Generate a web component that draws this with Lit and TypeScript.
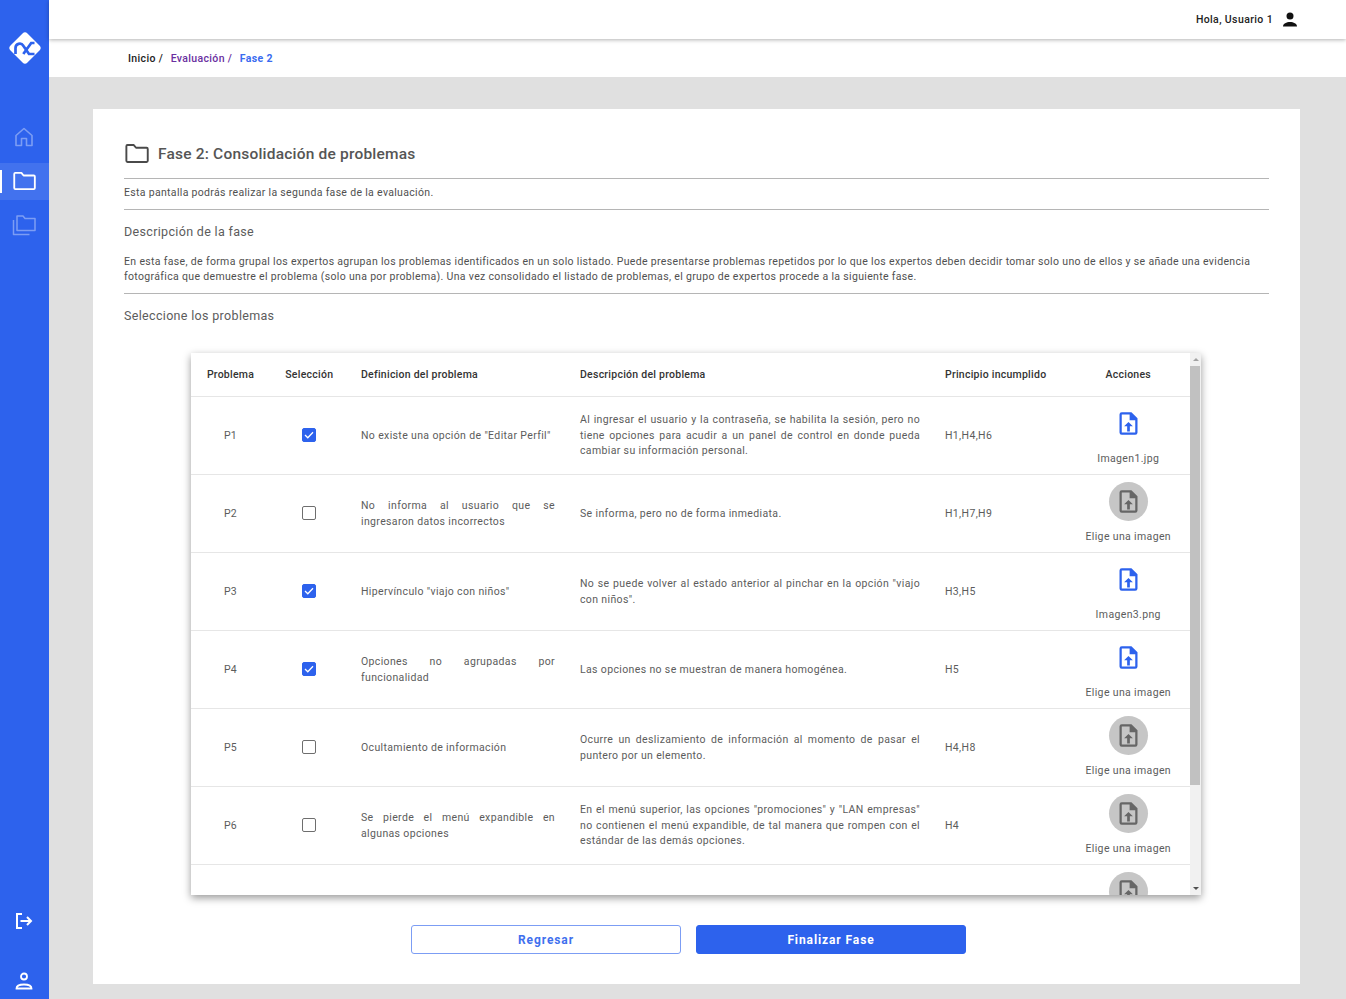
import { LitElement, html, css, svg } from 'lit';
import { customElement } from 'lit/decorators.js';

interface Row {
    id: string;
    checked: boolean;
    definition: string;
    description: string;
    principle: string;
    file: string;
    uploaded: boolean;
}

const ROWS: Row[] = [
    { id: 'P1', checked: true, definition: 'No existe una opción de "Editar Perfil"', description: 'Al ingresar el usuario y la contraseña, se habilita la sesión, pero no tiene opciones para acudir a un panel de control en donde pueda cambiar su información personal.', principle: 'H1,H4,H6', file: 'Imagen1.jpg', uploaded: true },
    { id: 'P2', checked: false, definition: 'No informa al usuario que se ingresaron datos incorrectos', description: 'Se informa, pero no de forma inmediata.', principle: 'H1,H7,H9', file: 'Elige una imagen', uploaded: false },
    { id: 'P3', checked: true, definition: 'Hipervínculo "viajo con niños"', description: 'No se puede volver al estado anterior al pinchar en la opción "viajo con niños".', principle: 'H3,H5', file: 'Imagen3.png', uploaded: true },
    { id: 'P4', checked: true, definition: 'Opciones no agrupadas por funcionalidad', description: 'Las opciones no se muestran de manera homogénea.', principle: 'H5', file: 'Elige una imagen', uploaded: true },
    { id: 'P5', checked: false, definition: 'Ocultamiento de información', description: 'Ocurre un deslizamiento de información al momento de pasar el puntero por un elemento.', principle: 'H4,H8', file: 'Elige una imagen', uploaded: false },
    { id: 'P6', checked: false, definition: 'Se pierde el menú expandible en algunas opciones', description: 'En el menú superior, las opciones "promociones" y "LAN empresas" no contienen el menú expandible, de tal manera que rompen con el estándar de las demás opciones.', principle: 'H4', file: 'Elige una imagen', uploaded: false },
];

const folderPath = svg`<path d="M3 5.500a1 1 0 0 1 1-1h5.600l2 2.400H21a1 1 0 0 1 1 1v10.600a1 1 0 0 1-1 1H4a1 1 0 0 1-1-1z" fill="none" stroke="currentColor" stroke-width="1.700" stroke-linejoin="round"/>`;

const fileUpload = svg`<path fill-rule="evenodd" fill="currentColor" d="M6 2h8.600L20 7.400V20a2 2 0 0 1-2 2H6a2 2 0 0 1-2-2V4a2 2 0 0 1 2-2zm0 2v16h12V9h-5V4z"/><path fill="currentColor" d="M12 10.600l3.900 3.900h-2.700V19h-2.400v-4.500H8.100z"/>`;

@customElement('app-root')
export class AppRoot extends LitElement {
    static styles = css`
        :host {
            display: flex;
            height: 999px;
            overflow: hidden;
            font-family: Roboto, "Liberation Sans", sans-serif;
            background: #e0e0e0;
        }
        .side {
            width: 49px;
            flex: none;
            background: #2d62ed;
            display: flex;
            flex-direction: column;
            color: #fff;
        }
        .logo { display: flex; justify-content: center; padding-top: 29.500px; height: 115px; box-sizing: border-box; }
        .nav { height: 37px; margin: 3.500px 0; padding-right: 1px; display: flex; align-items: center; justify-content: center; color: rgba(255,255,255,.38); position: relative; }
        .nav.active { background: rgba(255,255,255,.1); color: #fff; }
        .nav.active::before { content: ''; position: absolute; left: 0; top: 7px; bottom: 7px; width: 2px; background: #fff; }
        .spacer { flex: 1; }
        .foot { height: 26px; padding-right: 1px; display: flex; align-items: center; justify-content: center; }
        .foot.out { margin-bottom: 34px; }
        .foot.user { margin-bottom: 5px; }
        .main { flex: 1; min-width: 0; display: flex; flex-direction: column; }
        .top {
            height: 39px;
            background: #fff;
            box-shadow: 0 1px 4px rgba(0,0,0,.3);
            display: flex;
            align-items: center;
            justify-content: flex-end;
            gap: 8px;
            padding-right: 47px;
            font-size: 10.500px;
            font-weight: 500;
            letter-spacing: .38px;
            color: #222;
            position: relative;
        }
        .crumbs {
            height: 38px;
            background: #fff;
            display: flex;
            align-items: center;
            gap: 7.500px;
            padding-left: 79px;
            font-size: 10.500px;
            font-weight: 500;
            letter-spacing: .35px;
            color: #222;
        }
        .crumbs .purple { color: #6a2fa0; }
        .crumbs .blue { color: #3a6cf0; font-weight: 700; }
        .page { flex: 1; padding: 32px 46px 15px 44px; min-height: 0; display: flex; }
        .card { flex: 1; background: #fff; padding: 0 31px; display: flex; flex-direction: column; min-width: 0; }
        .title { height: 70px; display: flex; align-items: center; gap: 8px; border-bottom: 1px solid #b5b5b5; padding-top: 20px; box-sizing: border-box; color: #4a4a4a; }
        .title svg { margin-left: -1px; }
        .title h1 { font-size: 15.500px; font-weight: 500; letter-spacing: .2px; margin: 0; color: #555; }
        .intro { height: 31px; padding-bottom: 3px; display: flex; align-items: center; font-size: 10.500px; letter-spacing: .32px; color: #505050; border-bottom: 1px solid #b5b5b5; box-sizing: border-box; }
        h2 { font-size: 12.500px; font-weight: 400; letter-spacing: .33px; color: #5c5c5c; margin: 0; }
        .desc-title { padding-top: 14px; height: 44px; box-sizing: border-box; }
        .para { font-size: 10.500px; line-height: 15px; letter-spacing: .335px; color: #505050; padding-bottom: 9px; border-bottom: 1px solid #b5b5b5; margin: 0; }
        .sel-title { padding-top: 14px; height: 59px; box-sizing: border-box; }
        .table-wrap { margin-left: 67px; width: 1010px; height: 542px; background: #fff; display: flex; overflow: hidden; box-shadow: 0 3px 8px rgba(0,0,0,.4); flex: none; }
        .table { width: 999px; flex: none; overflow: hidden; }
        .scrollbar { flex: 1; background: #f1f1f1; display: flex; flex-direction: column; align-items: center; }
        .arrow { height: 13px; flex: none; display: flex; align-items: center; justify-content: center; }
        .arrow::before { content: ''; border-left: 3px solid transparent; border-right: 3px solid transparent; }
        .arrow.up::before { border-bottom: 3px solid #a3a3a3; }
        .arrow.down::before { border-top: 3px solid #505050; }
        .thumb { width: 10px; height: 419px; margin-right: 1px; background: #c1c1c1; flex: none; }
        .track { flex: 1; }
        .row { display: grid; grid-template-columns: 79px 78.500px 219px 365px 134px 123.500px; height: 78px; align-items: center; border-bottom: 1px solid #e6e6e6; box-sizing: border-box; font-size: 10.500px; line-height: 15.500px; letter-spacing: .36px; color: #5c5c5c; }
        .row .l { margin-bottom: 1px; }
        .row.head { height: 44px; color: #333; font-weight: 500; letter-spacing: .25px; }
        .row.head .l { margin-bottom: 0; }
        .c { text-align: center; }
        .l { padding: 0 12.500px; text-align: justify; }
        .box { width: 14px; height: 14px; margin: 0 auto 2px; box-sizing: border-box; border: 1.500px solid #6e6e6e; border-radius: 2px; display: flex; align-items: center; justify-content: center; }
        .box.on { background: #2d62ed; border-color: #2d62ed; }
        .act { display: flex; flex-direction: column; align-items: center; height: 78px; padding-top: 7px; box-sizing: border-box; }
        .pic { width: 39px; height: 39px; border-radius: 50%; display: flex; align-items: center; justify-content: center; color: #666; background: #c6c6c6; }
        .pic.done { background: none; color: #2d62ed; }
        .act .name { margin-top: 8px; white-space: nowrap; }
        .actions { display: flex; justify-content: center; gap: 15px; padding: 30px 16px 0 0; }
        .btn { width: 270px; height: 29px; box-sizing: border-box; border-radius: 3px; border: 1px solid #2d62ed; font-size: 12px; font-weight: 700; letter-spacing: .9px; display: flex; align-items: center; justify-content: center; }
        .btn.ghost { background: #fff; color: #3f70ee; border-color: #7c9df4; }
        .btn.solid { background: #2d62ed; color: #fff; }
    `;

    private renderPic(uploaded: boolean) {
        return html`
            <div class="pic ${uploaded ? 'done' : ''}">
                <svg width="27" height="27" viewBox="0 0 24 24">${fileUpload}</svg>
            </div>
        `;
    }

    private renderRow(r: Row) {
        return html`
            <div class="row">
                <div class="c">${r.id}</div>
                <div class="c">
                    <div class="box ${r.checked ? 'on' : ''}">
                        ${r.checked ? html`<svg width="10" height="8" viewBox="0 0 10 8"><path d="M1 4l2.800 2.800L9 1.200" fill="none" stroke="#fff" stroke-width="1.300"/></svg>` : ''}
                    </div>
                </div>
                <div class="l">${r.definition}</div>
                <div class="l">${r.description}</div>
                <div class="l">${r.principle}</div>
                <div class="act">
                    ${this.renderPic(r.uploaded)}
                    <div class="name">${r.file}</div>
                </div>
            </div>
        `;
    }

    render() {
        return html`
            <aside class="side">
                <div class="logo">
                    <svg width="36" height="36" viewBox="0 0 36 36">
                        <rect x="6" y="6" width="24" height="24" rx="3.500" fill="#fff" transform="rotate(45 18 18)"/>
                        <path d="M8.500 24v-6a4.200 4.200 0 0 1 7.800-2.200L22 24h5.500M27.500 13h-3.300L16.300 24" fill="none" stroke="#2d62ed" stroke-width="2.700"/>
                    </svg>
                </div>
                <div class="nav">
                    <svg width="24" height="24" viewBox="0 0 24 24" fill="none" stroke="currentColor" stroke-width="1.600" stroke-linejoin="round"><path d="M4 10.500L12 3.500l8 7V20.500h-5.500v-7h-5v7H4z"/></svg>
                </div>
                <div class="nav active">
                    <svg width="26" height="26" viewBox="0 0 24 24">${folderPath}</svg>
                </div>
                <div class="nav">
                    <svg width="24" height="24" viewBox="0 0 24 24" fill="none" stroke="currentColor" stroke-width="1.500" stroke-linejoin="round"><path d="M5 3h6l2 2.500h10V17.500H5z"/><path d="M1.500 7v14.500h16"/></svg>
                </div>
                <div class="spacer"></div>
                <div class="foot out">
                    <svg width="20" height="20" viewBox="0 0 20 20" fill="none" stroke="#fff" stroke-width="2"><path d="M8 3H3v14h5"/><path d="M6.500 10H17M13 6l4 4-4 4"/></svg>
                </div>
                <div class="foot user">
                    <svg width="20" height="20" viewBox="0 0 20 20" fill="none" stroke="#fff" stroke-width="1.800"><circle cx="10" cy="5.500" r="3"/><path d="M2.500 17.500c0-2.800 3.500-4 7.500-4s7.500 1.200 7.500 4z"/></svg>
                </div>
            </aside>
            <div class="main">
                <header class="top">
                    <span>Hola, Usuario 1</span>
                    <svg width="18" height="18" viewBox="0 0 18 18" fill="#111"><circle cx="9" cy="5" r="3.500"/><path d="M2 15.500c0-3 3.500-4.500 7-4.500s7 1.500 7 4.500z"/></svg>
                </header>
                <nav class="crumbs">
                    <span>Inicio /</span>
                    <span class="purple">Evaluación /</span>
                    <span class="blue">Fase 2</span>
                </nav>
                <div class="page">
                    <section class="card">
                        <div class="title">
                            <svg width="27" height="27" viewBox="0 0 24 24">${folderPath}</svg>
                            <h1>Fase 2: Consolidación de problemas</h1>
                        </div>
                        <div class="intro">Esta pantalla podrás realizar la segunda fase de la evaluación.</div>
                        <h2 class="desc-title">Descripción de la fase</h2>
                        <p class="para">En esta fase, de forma grupal los expertos agrupan los problemas identificados en un solo listado. Puede presentarse problemas repetidos por lo que los expertos deben decidir tomar solo uno de ellos y se añade una evidencia fotográfica que demuestre el problema (solo una por problema). Una vez consolidado el listado de problemas, el grupo de expertos procede a la siguiente fase.</p>
                        <h2 class="sel-title">Seleccione los problemas</h2>
                        <div class="table-wrap">
                            <div class="table">
                                <div class="row head">
                                    <div class="c">Problema</div>
                                    <div class="c">Selección</div>
                                    <div class="l">Definicion del problema</div>
                                    <div class="l">Descripción del problema</div>
                                    <div class="l">Principio incumplido</div>
                                    <div class="c">Acciones</div>
                                </div>
                                ${ROWS.map((r) => this.renderRow(r))}
                                <div class="row">
                                    <div></div><div></div><div></div><div></div><div></div>
                                    <div class="act">${this.renderPic(false)}</div>
                                </div>
                            </div>
                            <div class="scrollbar">
                                <div class="arrow up"></div>
                                <div class="thumb"></div>
                                <div class="track"></div>
                                <div class="arrow down"></div>
                            </div>
                        </div>
                        <div class="actions">
                            <div class="btn ghost">Regresar</div>
                            <div class="btn solid">Finalizar Fase</div>
                        </div>
                    </section>
                </div>
            </div>
        `;
    }
}
